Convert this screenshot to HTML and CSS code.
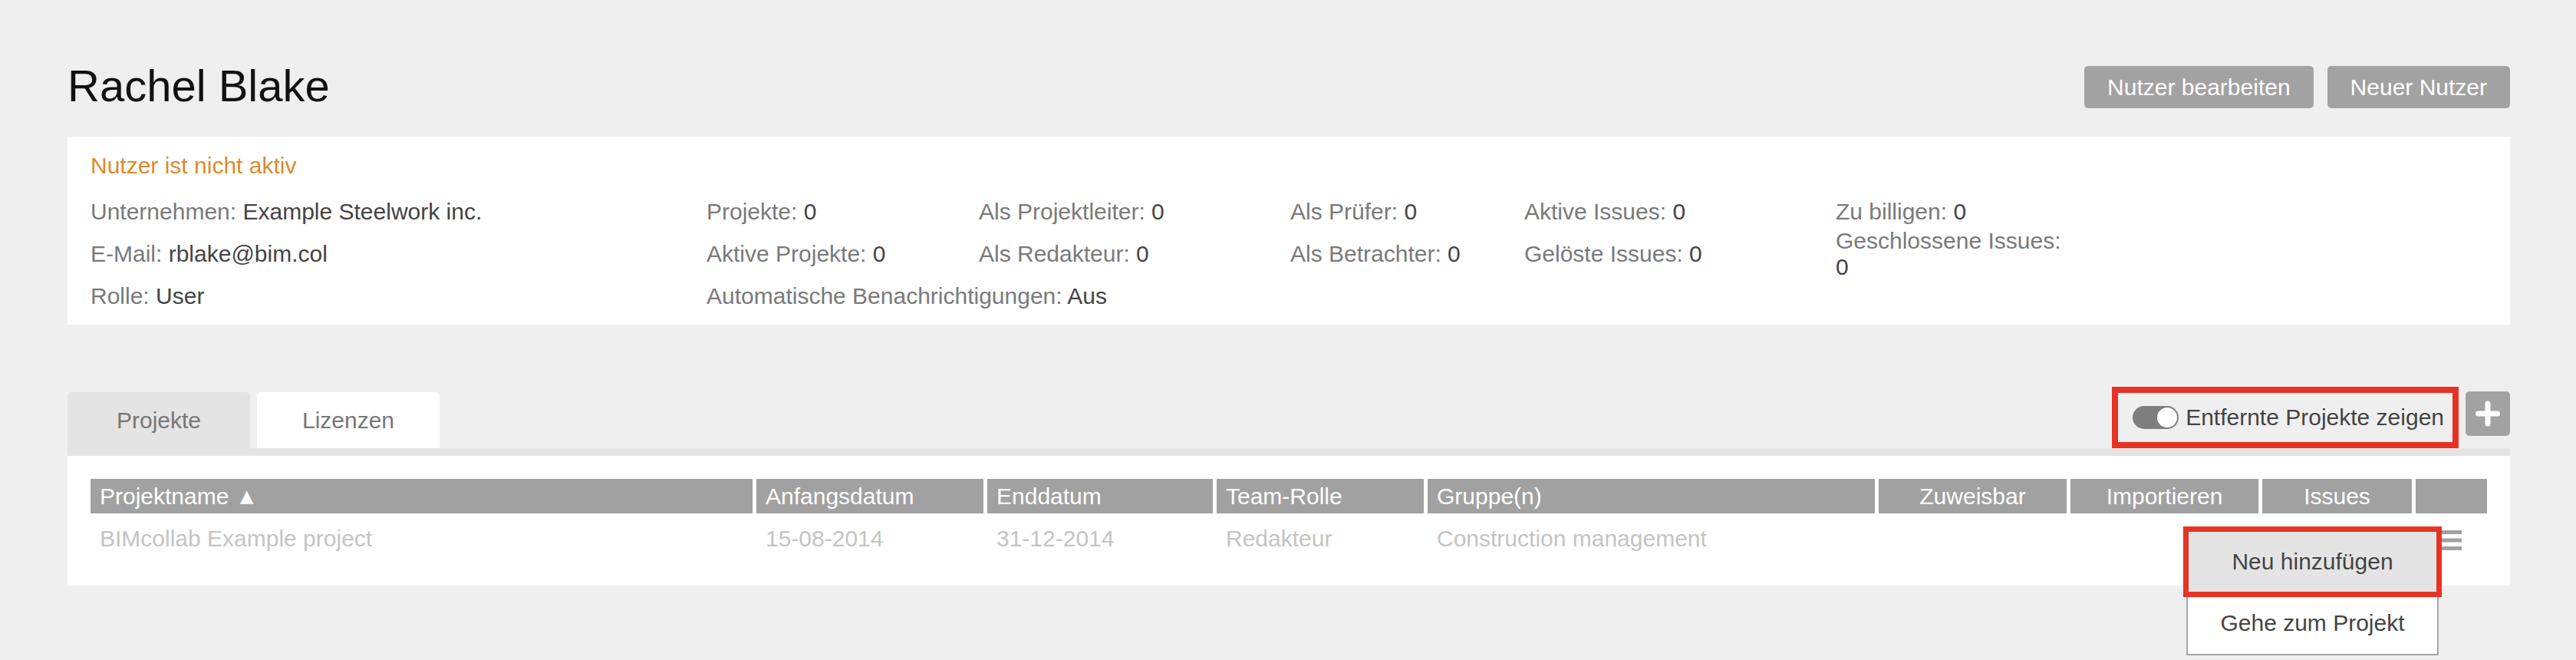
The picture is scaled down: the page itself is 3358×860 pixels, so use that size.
FILE: index.html
```html
<!DOCTYPE html>
<html lang="de">
  <head>
    <title>Rachel Blake</title>
    <link rel="stylesheet" href="styles.css">
  </head>
  <body>
    <div class="page">
      <div class="userHeader">
        <h1 class="userName">Rachel Blake</h1>
        <div class="headerButtons">
          <button class="greyButton">Nutzer bearbeiten</button>
          <button class="greyButton">Neuer Nutzer</button>
        </div>
      </div>

      <div class="userInfo">
        <p class="status">Nutzer ist nicht aktiv</p>
        <div class="infoGrid">
          <div><span class="label">Unternehmen:</span> Example Steelwork inc.</div>
          <div><span class="label">Projekte:</span> 0</div>
          <div><span class="label">Als Projektleiter:</span> 0</div>
          <div><span class="label">Als Prüfer:</span> 0</div>
          <div><span class="label">Aktive Issues:</span> 0</div>
          <div><span class="label">Zu billigen:</span> 0</div>

          <div><span class="label">E-Mail:</span> rblake@bim.col</div>
          <div><span class="label">Aktive Projekte:</span> 0</div>
          <div><span class="label">Als Redakteur:</span> 0</div>
          <div><span class="label">Als Betrachter:</span> 0</div>
          <div><span class="label">Gelöste Issues:</span> 0</div>
          <div><span class="label">Geschlossene Issues:</span> 0</div>

          <div><span class="label">Rolle:</span> User</div>
          <div class="wide"><span class="label">Automatische Benachrichtigungen:</span> Aus</div>
        </div>
      </div>

      <div class="tabBar">
        <div class="tabs">
          <div class="tab active">Projekte</div>
          <div class="tab">Lizenzen</div>
        </div>
        <div class="tools">
          <label class="showRemoved">
            <span class="toggle"></span>
            Entfernte Projekte zeigen
          </label>
          <button class="addButton">
            <svg width="58" height="58" viewBox="0 0 58 58">
              <path d="M16.5 29 H41.5 M29 16 V42" stroke="#fff" stroke-width="7" stroke-linecap="round" fill="none"/>
            </svg>
          </button>
        </div>
      </div>

      <div class="tabPanel">
        <table class="projects">
          <colgroup>
            <col style="width: 863px">
            <col style="width: 296px">
            <col style="width: 294px">
            <col style="width: 270px">
            <col style="width: 583px">
            <col style="width: 245px">
            <col style="width: 245px">
            <col style="width: 195px">
            <col>
          </colgroup>
          <thead>
            <tr>
              <th>Projektname ▲</th>
              <th>Anfangsdatum</th>
              <th>Enddatum</th>
              <th>Team-Rolle</th>
              <th>Gruppe(n)</th>
              <th class="center">Zuweisbar</th>
              <th class="center">Importieren</th>
              <th class="center">Issues</th>
              <th></th>
            </tr>
          </thead>
          <tbody>
            <tr>
              <td>BIMcollab Example project</td>
              <td>15-08-2014</td>
              <td>31-12-2014</td>
              <td>Redakteur</td>
              <td>Construction management</td>
              <td></td>
              <td></td>
              <td></td>
              <td class="menuCell">
                <svg class="menuIcon" width="27" height="26" viewBox="0 0 27 26">
                  <rect x="0" y="0" width="27" height="5" fill="#a1a1a1"/>
                  <rect x="0" y="10.5" width="27" height="5" fill="#a1a1a1"/>
                  <rect x="0" y="21" width="27" height="5" fill="#a1a1a1"/>
                </svg>
              </td>
            </tr>
          </tbody>
        </table>

        <!-- row menu, opened -->
        <div class="dropdown">
          <div class="dropdownItem hover">Neu hinzufügen</div>
          <div class="dropdownItem">Gehe zum Projekt</div>
        </div>
      </div>
    </div>
  </body>
</html>
```

FILE: styles.css
```css
body {
  margin: 0;
  background-color: #efefef;
  font-family: "Liberation Sans", Arial, sans-serif;
  font-size: 30px;
  line-height: 34px;
  color: #444;
}
.page {
  min-height: 100vh;
  box-sizing: border-box;
  padding: 80px 86px 0 88px;
}

/* header */
.userHeader {
  display: flex;
  justify-content: space-between;
  align-items: flex-start;
  margin-bottom: 34px;
}
.userName {
  margin: 0;
  font-size: 58px;
  line-height: 64px;
  font-weight: normal;
  color: #111;
}
.headerButtons {
  display: flex;
  gap: 18px;
  margin-top: 6px;
}
.greyButton {
  height: 55px;
  padding: 0 30px;
  border: none;
  border-radius: 5px;
  background-color: #a2a2a2;
  color: #fff;
  font-family: inherit;
  font-size: 30px;
}

/* user info */
.userInfo {
  background-color: #fff;
  padding: 21px 30px 10px;
}
.status {
  margin: 0 0 15px;
  color: #dd8a2e;
}
.infoGrid {
  display: grid;
  grid-template-columns: 803px 355px 406px 305px 406px 305px;
  grid-auto-rows: 55px;
  align-items: center;
}
.infoGrid .wide {
  grid-column: span 2;
}
.label {
  color: #7a7a7a;
}

/* tabs */
.tabBar {
  display: flex;
  justify-content: space-between;
  align-items: flex-end;
  margin-top: 81px;
}
.tabs {
  display: flex;
  gap: 9px;
}
.tab {
  width: 238px;
  height: 73px;
  line-height: 73px;
  text-align: center;
  color: #777;
  background-color: #fff;
  border-radius: 5px 5px 0 0;
}
.tab.active {
  background-color: #e5e4e5;
}
.tools {
  display: flex;
  gap: 9px;
  align-items: flex-start;
}
.showRemoved {
  display: flex;
  align-items: center;
  gap: 9px;
  height: 80px;
  box-sizing: border-box;
  padding: 0 11px 0 19px;
  border: 8px solid #e63323; /* highlight box */
  color: #444;
}
.toggle {
  position: relative;
  flex: none;
  width: 60px;
  height: 30px;
  border-radius: 15px;
  background-color: #7e7e7e;
}
.toggle::after {
  content: "";
  position: absolute;
  top: 2px;
  right: 2px;
  width: 26px;
  height: 26px;
  border-radius: 50%;
  background-color: #fff;
}
.addButton {
  width: 58px;
  height: 58px;
  margin-top: 6px;
  padding: 0;
  border: none;
  border-radius: 5px;
  background-color: #a2a2a2;
}
.addButton svg {
  display: block;
}

/* project table */
.tabPanel {
  position: relative;
  background-color: #fff;
  border-top: 10px solid #e5e4e5;
  padding: 25px 25px 29px;
}
.projects {
  width: 100%;
  border-spacing: 5px;
  table-layout: fixed;
}
.projects th {
  background-color: #a1a1a1;
  color: #fff;
  font-weight: normal;
  text-align: left;
  padding: 6px 12px 5px;
  white-space: nowrap;
}
.projects th.center {
  text-align: center;
}
.projects td {
  color: #c4c4c4;
  padding: 11px 12px 10px;
  white-space: nowrap;
}
.projects td.menuCell {
  text-align: center;
}
.menuIcon {
  display: inline-block;
  vertical-align: middle;
}
.dropdown {
  position: absolute;
  top: 96px;
  right: 93px;
  width: 329px;
  box-sizing: border-box;
  border: 2px solid #a8a8a8;
  background-color: #fff;
  color: #444;
  text-align: center;
  z-index: 2;
}
.dropdownItem {
  height: 80px;
  line-height: 80px;
}
.dropdownItem.hover {
  background-color: #e5e4e5;
  outline: 7px solid #e63323; /* highlight box */
  outline-offset: -1px;
}
```
